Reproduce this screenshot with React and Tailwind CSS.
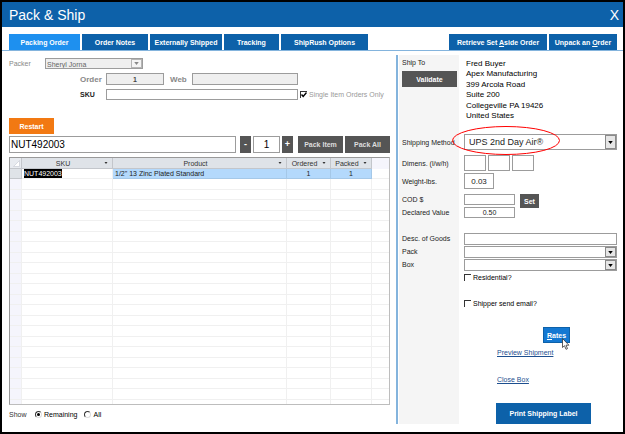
import { useState } from 'react';

const tabs = [
  { label: 'Packing Order', width: 'w-[71px]' },
  { label: 'Order Notes', width: 'w-[66px]' },
  { label: 'Externally Shipped', width: 'w-[72px]' },
  { label: 'Tracking', width: 'w-[55px]' },
  { label: 'ShipRush Options', width: 'w-[87px]' },
];

const address = [
  'Fred Buyer',
  'Apex Manufacturing',
  '399 Arcola Road',
  'Suite 200',
  'Collegeville PA 19426',
  'United States',
];

const emptyRows = Array.from({ length: 21 });

function Caret({ className = 'w-[5px] h-[3px]' }) {
  return (
    <svg viewBox="0 0 6 4" className={className} fill="currentColor" aria-hidden="true">
      <path d="M0 0h6L3 4z" />
    </svg>
  );
}

function TextBox({ className = '', ...props }) {
  return (
    <input
      type="text"
      className={`block min-w-0 border border-[#9c9c9c] px-px outline-none read-only:bg-[#efefef] ${className}`}
      {...props}
    />
  );
}

function Dropdown({ id, options, className = '', disabled = false }) {
  return (
    <div className={`relative ${className}`}>
      <select
        id={id}
        disabled={disabled}
        className={`block w-full h-full appearance-none border opacity-100 outline-none ${
          disabled ? 'border-[#9c9c9c] bg-[#efefef] pl-px text-[#666]' : 'border-[#9c9c9c] bg-white pl-1'
        }`}
      >
        {options.map((option) => (
          <option key={option}>{option}</option>
        ))}
      </select>
      <span
        className={`absolute inset-y-px right-px w-[11px] flex items-center justify-center border pointer-events-none ${
          disabled ? 'border-[#b5b5b5] bg-[#f4f4f4] text-[#888]' : 'border-[#8a8a8a] bg-[#e6e6e6] text-black'
        }`}
      >
        <Caret />
      </span>
    </div>
  );
}

function CheckBox({ id, label, checked, onChange, muted }) {
  return (
    <div className="flex items-center gap-[2px]">
      <span className="relative w-[7px] h-[7px]">
        <input
          id={id}
          type="checkbox"
          checked={checked}
          onChange={onChange}
          className="block w-[7px] h-[7px] appearance-none border-t border-l border-[#333] bg-white"
        />
        {checked && (
          <svg
            viewBox="0 0 7 7"
            className="absolute inset-0 w-[7px] h-[7px] pointer-events-none"
            fill="none"
            stroke="#000"
            strokeWidth="1.4"
          >
            <path d="M1.5 3.5l1.7 2L6.5 1.5" />
          </svg>
        )}
      </span>
      <label htmlFor={id} className={muted ? 'text-[#999]' : 'text-black'}>
        {label}
      </label>
    </div>
  );
}

function Radio({ id, label, checked, onChange }) {
  return (
    <div className="flex items-center gap-[2px]">
      <span className="relative w-[7px] h-[7px]">
        <input
          id={id}
          type="radio"
          name="show"
          checked={checked}
          onChange={onChange}
          className="block w-[7px] h-[7px] appearance-none rounded-full border border-[#ddd] border-t-[#333] border-l-[#333] bg-white"
        />
        {checked && (
          <span className="absolute left-[2px] top-[2px] w-[3px] h-[3px] rounded-full bg-black pointer-events-none"></span>
        )}
      </span>
      <label htmlFor={id} className="text-black">{label}</label>
    </div>
  );
}

function HeadCell({ children }) {
  return (
    <th className="h-[11px] p-0 border-r border-b border-[#c3c6cb] bg-[#dfe3e8] font-normal text-[#333]">
      <div className="flex items-center pr-[4px]">
        <span className="flex-1 text-center">{children}</span>
        <Caret className="w-[4px] h-[2px]" />
      </div>
    </th>
  );
}

function OrderTable() {
  const line = 'p-0 border-r border-b border-[#f0f0f0]';
  const active = 'p-0 border-r border-b border-[#a5c8e8] bg-[#b4d9fc]';

  return (
    <div className="border border-t-[#999] border-l-[#999] border-[#bdbdbd]">
      <table className="w-full table-fixed border-separate border-spacing-0 leading-[9px]">
        <colgroup>
          <col className="w-[12px]" />
          <col className="w-[91px]" />
          <col />
          <col className="w-[44px]" />
          <col className="w-[41px]" />
          <col className="w-[17px]" />
        </colgroup>
        <thead>
          <tr>
            <th className="h-[11px] p-0 border-r border-b border-[#c3c6cb] bg-[#e8ebf0]">
              <svg viewBox="0 0 7 7" className="w-[7px] h-[7px] ml-[3px]" fill="#fff" stroke="#c9cdd6" strokeWidth="0.7">
                <path d="M6.5 0.5v6h-6z" />
              </svg>
            </th>
            <HeadCell>SKU</HeadCell>
            <HeadCell>Product</HeadCell>
            <HeadCell>Ordered</HeadCell>
            <HeadCell>Packed</HeadCell>
            <th className="p-0 bg-[#f5f5fc]"></th>
          </tr>
        </thead>
        <tbody>
          <tr>
            <td className="h-[10px] p-0 border-r border-b border-[#c3c6cb] bg-[#dfe3e8]"></td>
            <td className={`${line} pl-[2px]`}>
              <span className="block w-fit bg-black text-white">NUT492003</span>
            </td>
            <td className={`${active} pl-[2px]`}>1/2" 13 Zinc Plated Standard</td>
            <td className={`${active} text-center`}>1</td>
            <td className={`${active} text-center`}>1</td>
            <td className="p-0 border-b border-[#f0f0f0]"></td>
          </tr>
          {emptyRows.map((_, i) => (
            <tr key={i} className="h-[10px] even:h-[11px]">
              <td className={`${line} bg-[#f5f5fc]`}></td>
              <td className={line}></td>
              <td className={line}></td>
              <td className={line}></td>
              <td className={line}></td>
              <td className="p-0 border-b border-[#f0f0f0]"></td>
            </tr>
          ))}
          <tr className="h-[4px]">
            <td className="p-0 border-r border-[#f0f0f0] bg-[#f5f5fc]"></td>
            <td className="p-0 border-r border-[#f0f0f0]"></td>
            <td className="p-0 border-r border-[#f0f0f0]"></td>
            <td className="p-0 border-r border-[#f0f0f0]"></td>
            <td className="p-0 border-r border-[#f0f0f0]"></td>
            <td className="p-0"></td>
          </tr>
        </tbody>
      </table>
    </div>
  );
}

function PackingPanel() {
  const [sku, setSku] = useState('');
  const [scan, setScan] = useState('NUT492003');
  const [qty, setQty] = useState(1);
  const [singleOnly, setSingleOnly] = useState(true);
  const [show, setShow] = useState('remaining');

  return (
    <section className="flex-1 min-w-0 pl-[7px] pr-[6px] pt-[7px]">
      <div className="flex items-center">
        <label htmlFor="packer" className="w-[36px] text-[#888]">Packer</label>
        <Dropdown id="packer" options={['Sheryl Jorna']} className="w-[98px] h-[11px]" disabled />
      </div>

      <div className="flex items-center mt-[4px] pl-[71px] text-[#888]">
        <label htmlFor="order" className="w-[26px] text-[8px] font-bold">Order</label>
        <TextBox id="order" className="w-[58px] h-[12px] text-center text-[#444] font-bold" defaultValue="1" readOnly />
        <label htmlFor="web" className="w-[28px] pl-[6px] text-[8px] font-bold">Web</label>
        <TextBox id="web" className="w-[106px] h-[12px]" readOnly />
      </div>

      <div className="flex items-center mt-[4px] pl-[71px]">
        <label htmlFor="sku" className="w-[26px] font-bold">SKU</label>
        <TextBox id="sku" className="w-[192px] h-[11px] mr-[2px]" value={sku} onChange={(e) => setSku(e.target.value)} />
        <CheckBox
          id="single"
          label="Single Item Orders Only"
          checked={singleOnly}
          onChange={(e) => setSingleOnly(e.target.checked)}
          muted
        />
      </div>

      <button className="block mt-[18px] w-[45px] h-[16px] bg-[#f27912] text-white font-bold">Restart</button>

      <div className="flex items-stretch mt-[2px] h-[17px] text-white font-bold">
        <TextBox
          aria-label="Scan item"
          className="flex-1 mr-[4px] text-[10px] font-normal text-black"
          value={scan}
          onChange={(e) => setScan(e.target.value)}
        />
        <button onClick={() => setQty(Math.max(1, qty - 1))} className="w-[11px] mr-[2px] bg-[#555] text-[9px]">-</button>
        <TextBox
          aria-label="Quantity"
          className="w-[27px] mr-[2px] text-center text-[10px] font-normal text-black"
          value={qty}
          onChange={(e) => setQty(Number(e.target.value) || 1)}
        />
        <button onClick={() => setQty(qty + 1)} className="w-[11px] mr-[5px] bg-[#555] text-[9px]">+</button>
        <button className="w-[45px] mr-[2px] bg-[#555] text-[#ddd]">Pack Item</button>
        <button className="w-[45px] bg-[#555] text-[#ddd]">Pack All</button>
      </div>

      <div className="mt-[4px]">
        <OrderTable />
      </div>

      <div className="flex items-center mt-[4px]">
        <span className="w-[26px] text-[#333]">Show</span>
        <Radio id="remaining" label="Remaining" checked={show === 'remaining'} onChange={() => setShow('remaining')} />
        <span className="w-[7px]"></span>
        <Radio id="all" label="All" checked={show === 'all'} onChange={() => setShow('all')} />
      </div>
    </section>
  );
}

function FieldRow({ id, label, className = '', children }) {
  return (
    <div className={`flex ${className}`}>
      <label htmlFor={id} className="w-[62px] shrink-0 leading-[11px] whitespace-nowrap">{label}</label>
      {children}
    </div>
  );
}

function ShippingPanel() {
  const [residential, setResidential] = useState(false);
  const [email, setEmail] = useState(false);

  return (
    <section className="w-[227px] mt-[4px] shrink-0 border-l-2 border-[#84b4dd] pl-[4px] pr-[6px] bg-[linear-gradient(to_right,#fff_1px,#f5f5f5_1px,#f5f5f5_61px,#fff_61px)]">
      {/* Ship To */}
      <div className="flex h-[79px]">
        <div className="w-[64px] shrink-0 pt-[3px]">
          <p className="leading-[9px]">Ship To</p>
          <button className="block mt-[4px] w-[55px] h-[16px] bg-[#555] text-white font-bold">Validate</button>
        </div>
        <address className="pt-[4px] text-[8px] not-italic text-black">
          {address.map((row) => (
            <p key={row} className="h-[10px] even:h-[11px] leading-[10px]">{row}</p>
          ))}
        </address>
      </div>

      <FieldRow id="method" label="Shipping Method" className="items-center">
        <div className="relative flex-1 text-[9px]">
          <Dropdown id="method" options={['UPS 2nd Day Air®']} className="h-[16px]" />
          <svg
            viewBox="0 0 108 29"
            className="absolute -left-[12px] -top-[8px] w-[108px] h-[29px] pointer-events-none"
            fill="none"
            stroke="#f00"
          >
            <ellipse cx="54" cy="14.5" rx="53.5" ry="14" />
          </svg>
        </div>
      </FieldRow>

      <FieldRow id="length" label="Dimens. (l/w/h)" className="mt-[5px] items-center">
        <div className="flex gap-[2px]">
          <TextBox id="length" className="w-[22px] h-[16px]" />
          <TextBox aria-label="Width" className="w-[22px] h-[16px]" />
          <TextBox aria-label="Height" className="w-[22px] h-[16px]" />
        </div>
      </FieldRow>

      <FieldRow id="weight" label="Weight-lbs." className="mt-[2px] items-center">
        <TextBox id="weight" className="w-[30px] h-[16px] text-center text-[8px]" defaultValue="0.03" />
      </FieldRow>

      <FieldRow id="cod" label="COD $" className="mt-[5px] h-[13px]">
        <TextBox id="cod" className="w-[51px] h-[11px]" />
        <button className="ml-[5px] w-[19px] h-[14px] bg-[#555] text-white font-bold">Set</button>
      </FieldRow>

      <FieldRow id="declared" label="Declared Value">
        <TextBox id="declared" className="w-[51px] h-[11px] text-center" defaultValue="0.50" />
      </FieldRow>

      <FieldRow id="desc" label="Desc. of Goods" className="mt-[15px]">
        <TextBox id="desc" className="flex-1 h-[12px]" />
      </FieldRow>

      <FieldRow id="pack" label="Pack" className="mt-px">
        <Dropdown id="pack" options={['']} className="flex-1 h-[12px]" />
      </FieldRow>

      <FieldRow id="box" label="Box" className="mt-px">
        <Dropdown id="box" options={['']} className="flex-1 h-[12px]" />
      </FieldRow>

      <div className="pl-[62px] mt-px">
        <CheckBox
          id="residential"
          label="Residential?"
          checked={residential}
          onChange={(e) => setResidential(e.target.checked)}
        />
      </div>
      <div className="pl-[62px] mt-[15px]">
        <CheckBox
          id="email"
          label="Shipper send email?"
          checked={email}
          onChange={(e) => setEmail(e.target.checked)}
        />
      </div>

      <div className="relative ml-[141px] mt-[18px] w-[27px]">
        <button className="block w-full h-[16px] border border-[#0d61a9] bg-[#1378d2] text-white font-bold">
          <u>R</u>ates
        </button>
        {/* Mouse pointer */}
        <svg viewBox="0 0 8 12" className="absolute left-[19px] top-[11px] w-[8px] h-[12px]" fill="#fff" stroke="#333" strokeWidth="0.8">
          <path d="M0.5 0.5v9l2-1.8 1.5 3.6 1.5-.7-1.5-3.4h2.9z" />
        </svg>
      </div>

      <div className="flex flex-col items-start pl-[95px] mt-[4px] text-[#1d4f8f]">
        <a href="#preview" className="underline">Preview Shipment</a>
        <a href="#close" className="mt-[16px] underline">Close Box</a>
      </div>

      <button className="block ml-[94px] mt-[18px] w-[95px] h-[21px] bg-[#0d61a9] text-white font-bold">
        Print Shipping Label
      </button>
    </section>
  );
}

export default function App() {
  const [activeTab, setActiveTab] = useState('Packing Order');

  return (
    <div className="min-h-screen border-2 border-black bg-white font-['Liberation_Sans',Arial,sans-serif] text-[7px] leading-[11px] text-[#222]">
      {/* Title bar */}
      <header className="flex items-center justify-between h-[25px] pl-[7px] pr-[4px] bg-[#0d61a9] text-white">
        <h1 className="text-[14px] leading-[16px]">Pack &amp; Ship</h1>
        <button aria-label="Close" className="text-[14px] leading-[16px]">X</button>
      </header>

      {/* Tabs */}
      <nav className="flex gap-[2px] h-[24px] pt-[7px] pl-[7px] pr-[6px] border-b border-[#84b4dd] text-white font-bold">
        {tabs.map((tab) => (
          <button
            key={tab.label}
            onClick={() => setActiveTab(tab.label)}
            className={`${tab.width} whitespace-nowrap ${activeTab === tab.label ? 'bg-[#1e90ef]' : 'bg-[#0d61a9]'}`}
          >
            {tab.label}
          </button>
        ))}
        <button className="ml-auto w-[98px] whitespace-nowrap bg-[#0d61a9]">
          Retrieve Set <u>A</u>side Order
        </button>
        <button className="w-[68px] whitespace-nowrap bg-[#0d61a9]">
          Unpack an <u>O</u>rder
        </button>
      </nav>

      <main className="flex items-start">
        <PackingPanel />
        <ShippingPanel />
      </main>
    </div>
  );
}
